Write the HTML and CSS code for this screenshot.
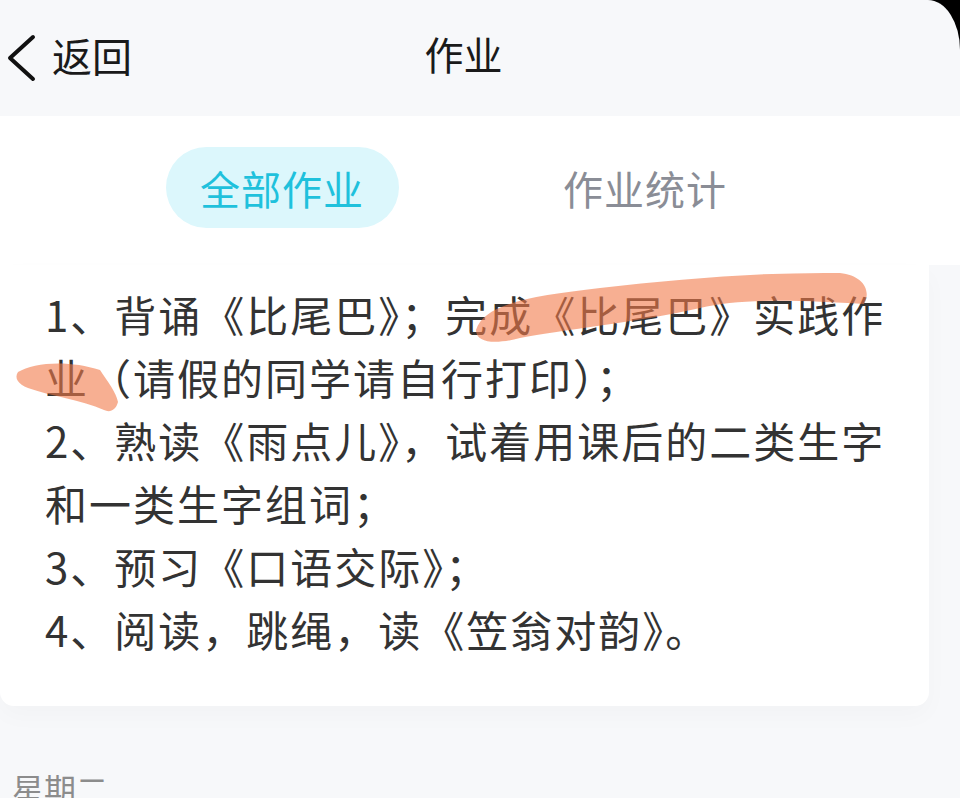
FILE: index.html
```html
<!DOCTYPE html>
<html lang="zh-CN">
<head>
  <meta charset="UTF-8">
  <meta name="viewport" content="width=device-width, initial-scale=1.0">
  <title>作业</title>
  <link rel="stylesheet" href="styles.css">
</head>
<body>
  <div class="app">
    <!-- 顶部导航 -->
    <div class="header">
      <div class="back">
        <svg class="back-icon" width="34" height="50" viewBox="0 0 34 50">
          <polyline points="27,4 4,25 27,46" fill="none" stroke="#111" stroke-width="4" stroke-linecap="round" stroke-linejoin="round"/>
        </svg>
        <span>返回</span>
      </div>
      <div class="title">作业</div>
      <div></div>
    </div>

    <!-- 标签切换 -->
    <div class="tab-band">
      <div class="tabs">
        <div class="tab active">全部作业</div>
        <div class="tab">作业统计</div>
      </div>
    </div>

    <!-- 作业内容 -->
    <div class="card">
      <p class="homework">1、背诵《比尾巴》；完成《比尾巴》实践作业（请假的同学请自行打印）；<br>2、熟读《雨点儿》，试着用课后的二类生字和一类生字组词；<br>3、预习《口语交际》；<br>4、阅读，跳绳，读《笠翁对韵》。</p>
    </div>

    <div class="day">星期二</div>

    <!-- 荧光笔标记 -->
    <svg class="marks" width="960" height="798" viewBox="0 0 960 798">
      <path d="M476 330 C484 304 530 296 600 288 C680 279 760 272 840 273 C862 275 872 290 864 304 C800 300 740 298 700 308 C640 322 560 330 520 338 C498 344 476 344 476 330 Z"/>
      <path d="M18 372 C34 362 70 360 100 370 C108 382 116 392 118 402 C116 410 110 413 104 410 C82 400 50 396 28 388 C18 384 14 378 18 372 Z"/>
    </svg>
  </div>
</body>
</html>
```

FILE: styles.css
```css
html,
body {
  margin: 0;
  background-color: #000;
}
body {
  font-family: "Noto Sans CJK SC", "Noto Sans", sans-serif;
}
.app {
  position: relative;
  width: 960px;
  height: 798px;
  overflow: hidden;
  background-color: #f7f8fa;
  border-top-right-radius: 32px 50px;
}
.header {
  width: 927px;
  height: 116px;
  display: grid;
  grid-template-columns: 1fr auto 1fr;
  align-items: center;
}
.back {
  display: flex;
  align-items: center;
  gap: 12px;
  padding-left: 6px;
  font-size: 40px;
  color: #1a1a1a;
}
.back span {
  margin-top: -6px;
}
.title {
  font-size: 39px;
  color: #1a1a1a;
  margin-top: -10px;
}
.tab-band {
  background-color: #fff;
  height: 149px;
}
.tabs {
  width: 927px;
  display: flex;
  justify-content: center;
  gap: 130px;
  padding-top: 31px;
}
.tab {
  width: 233px;
  height: 81px;
  border-radius: 41px;
  display: flex;
  align-items: center;
  justify-content: center;
  font-size: 40px;
  letter-spacing: 1px;
  color: #8a8d96;
}
.tab.active {
  background-color: #dcf7fc;
  color: #1fc1dc;
}
.card {
  width: 929px;
  box-sizing: border-box;
  background-color: #fff;
  border-radius: 0 0 14px 14px;
  padding: 17px 40px 46px 45px;
  box-shadow: 0 10px 24px rgba(0, 0, 0, 0.025);
}
.homework {
  margin: 0;
  font-size: 42px;
  line-height: 63px;
  letter-spacing: 2px;
  color: #333;
}
.day {
  margin-top: 59px;
  padding-left: 12px;
  font-size: 32px;
  color: #8c8c8c;
}
.marks {
  position: absolute;
  left: 0;
  top: 0;
  pointer-events: none;
}
.marks path {
  fill: #f27a4a;
  fill-opacity: 0.6;
}
```
